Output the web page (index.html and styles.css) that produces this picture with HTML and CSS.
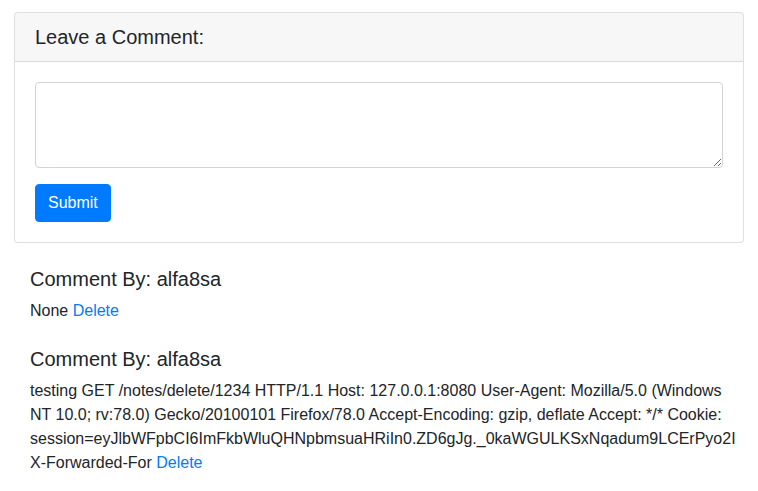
FILE: index.html
```html
<!DOCTYPE html>
<html lang="en">
<head>
<meta charset="utf-8">
<title>Comments</title>
<link rel="stylesheet" href="styles.css">
</head>
<body>
<div class="page">
  <div class="card">
    <div class="card-header"><h5 class="title">Leave a Comment:</h5></div>
    <div class="card-body">
      <form class="form">
        <div class="form-group">
          <textarea class="form-control" rows="3"></textarea>
        </div>
        <button type="button" class="btn">Submit</button>
      </form>
    </div>
  </div>
  <div class="comments">
    <div class="comment">
      <h5 class="comment-title">Comment By: alfa8sa</h5>
      <p class="comment-text">None <a href="#" class="link">Delete</a></p>
    </div>
    <div class="comment">
      <h5 class="comment-title">Comment By: alfa8sa</h5>
      <p class="comment-text">testing GET /notes/delete/1234 HTTP/1.1 Host: 127.0.0.1:8080 User-Agent: Mozilla/5.0 (Windows NT 10.0; rv:78.0) Gecko/20100101 Firefox/78.0 Accept-Encoding: gzip, deflate Accept: */* Cookie: session=eyJlbWFpbCI6ImFkbWluQHNpbmsuaHRiIn0.ZD6gJg._0kaWGULKSxNqadum9LCErPyo2I X-Forwarded-For <a href="#" class="link">Delete</a></p>
    </div>
  </div>
</div>
</body>
</html>
```
FILE: styles.css
```css
* { box-sizing: border-box; }
html, body { margin: 0; padding: 0; background: #fff; }
body {
  font-family: "Liberation Sans", Arial, sans-serif;
  font-size: 16px;
  line-height: 1.5;
  color: #212529;
}
.page { padding: 12px 14px; }
.card {
  border: 1px solid rgba(0,0,0,.125);
  border-radius: 4px;
  background: #fff;
}
.card-header {
  background: rgba(0,0,0,.03);
  border-bottom: 1px solid rgba(0,0,0,.125);
  padding: 12px 20px;
  border-radius: 3px 3px 0 0;
}
.title, .comment-title {
  margin: 0;
  font-size: 20px;
  font-weight: 400;
  line-height: 1.2;
}
.card-body { padding: 20px; }
.form-group { margin-bottom: 16px; }
.form-control {
  display: block;
  width: 100%;
  padding: 6px 12px;
  font-family: inherit;
  font-size: 16px;
  line-height: 1.5;
  color: #495057;
  border: 1px solid #ced4da;
  border-radius: 4px;
  background: #fff;
  margin: 0;
}
.btn {
  display: inline-block;
  font-family: inherit;
  font-size: 16px;
  line-height: 1.5;
  padding: 6px 12px;
  color: #fff;
  background: #007bff;
  border: 1px solid #007bff;
  border-radius: 4px;
  margin: 0;
}
.comments {
  padding: 0 16px;
  display: flex;
  flex-direction: column;
}
.comment { padding-top: 24px; }
.comment-title { margin-bottom: 8px; }
.comment-text { margin: 0; }
.link { color: #007bff; text-decoration: none; }
```
